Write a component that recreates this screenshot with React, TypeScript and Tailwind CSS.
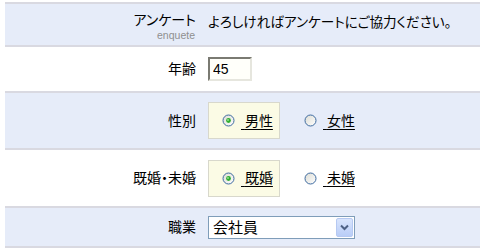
import { useState } from "react";

const font = "font-['Liberation_Sans','Noto_Sans_CJK_JP',sans-serif] [font-feature-settings:'palt']";

function Radio({ checked }: { checked: boolean }) {
  return (
    <svg width="13" height="13" viewBox="0 0 13 13" className="shrink-0">
      <defs>
        <linearGradient id={checked ? "rg-on" : "rg-off"} x1="0" y1="0" x2="1" y2="1">
          <stop offset="0" stopColor="#dcdcd4" />
          <stop offset="1" stopColor="#ffffff" />
        </linearGradient>
      </defs>
      <circle
        cx="6.5"
        cy="6.5"
        r="5.5"
        fill={`url(#${checked ? "rg-on" : "rg-off"})`}
        stroke="#3d6aa0"
        strokeWidth="1"
      />
      {checked ? <circle cx="6.5" cy="6.5" r="2.4" fill="#2fae2f" /> : null}
      {checked ? <circle cx="6" cy="6" r="0.9" fill="#9be39b" /> : null}
    </svg>
  );
}

function RadioPair({ options }: { options: string[] }) {
  const [selected, setSelected] = useState(0);
  return (
    <div className="flex items-center">
      {options.map((opt, i) =>
        i === selected ? (
          <button
            key={opt}
            onClick={() => setSelected(i)}
            className="flex h-[37px] w-[72px] items-center gap-[6px] border border-[#d8d8cc] bg-[#fbfbe5] pl-[13px]"
          >
            <Radio checked />
            <span className="text-[14px] leading-none underline underline-offset-[3px]">&nbsp;{opt}</span>
          </button>
        ) : (
          <button
            key={opt}
            onClick={() => setSelected(i)}
            className="ml-[24px] flex items-center gap-[6px]"
          >
            <Radio checked={false} />
            <span className="text-[14px] leading-none underline underline-offset-[3px]">&nbsp;{opt}</span>
          </button>
        )
      )}
    </div>
  );
}

function Label({ children }: { children: React.ReactNode }) {
  return (
    <div className="w-[192px] shrink-0 pr-[1px] text-right text-[14px] leading-none text-black">
      {children}
    </div>
  );
}

export default function App() {
  const [age, setAge] = useState("45");
  const [job, setJob] = useState("会社員");

  return (
    <div className={`${font} h-[249px] w-[480px] bg-white pl-[5px] pt-[2px] text-black`}>
      {/* アンケート */}
      <div className="flex h-[45px] items-start gap-[11px] border-y-2 border-[#d9d9e1] bg-[#e6ecf9] pt-[8px]">
        <div className="w-[192px] shrink-0 text-right">
          <div className="pr-[1px] text-[14px] leading-[16px]">アンケート</div>
          <div className="mt-[1px] pr-[2px] text-[10.5px] leading-[12px] text-[#8f8f8f]">enquete</div>
        </div>
        <div className="pt-[3px] text-[13.6px] leading-[16px]">よろしければアンケートにご協力ください。</div>
      </div>

      {/* 年齢 */}
      <div className="flex h-[46px] items-center gap-[11px] border-b-2 border-[#d9d9e1] bg-white">
        <Label>年齢</Label>
        <input
          value={age}
          onChange={(e) => setAge(e.target.value)}
          className="h-[24px] w-[44px] border-2 border-t-[#7a7a72] border-l-[#7a7a72] border-r-[#e6e6de] border-b-[#e6e6de] bg-[#fffffa] pl-[3px] text-[14px] outline-none"
        />
      </div>

      {/* 性別 */}
      <div className="flex h-[57px] items-center gap-[11px] border-b-2 border-[#d9d9e1] bg-[#e6ecf9]">
        <Label>性別</Label>
        <RadioPair options={["男性", "女性"]} />
      </div>

      {/* 既婚・未婚 */}
      <div className="flex h-[58px] items-center gap-[11px] border-b-2 border-[#d9d9e1] bg-white">
        <Label>既婚・未婚</Label>
        <RadioPair options={["既婚", "未婚"]} />
      </div>

      {/* 職業 */}
      <div className="flex h-[40px] items-center gap-[11px] border-b-2 border-[#d9d9e1] bg-[#e6ecf9]">
        <Label>職業</Label>
        <div className="relative flex h-[23px] w-[147px] items-center border border-[#7f9db9] bg-white">
          <span className="pl-[4px] text-[15px] leading-none">{job}</span>
          <select
            value={job}
            onChange={(e) => setJob(e.target.value)}
            className="absolute inset-0 opacity-0"
          >
            <option>会社員</option>
            <option>自営業</option>
            <option>学生</option>
            <option>その他</option>
          </select>
          <div className="pointer-events-none absolute right-[1px] top-[1px] flex h-[19px] w-[17px] items-center justify-center rounded-[2px] border border-[#b6c9f2] bg-[linear-gradient(#d9e5fd,#b9cdf7)]">
            <svg width="9" height="7" viewBox="0 0 9 7">
              <path d="M1 1.5 L4.5 5 L8 1.5" fill="none" stroke="#4d6185" strokeWidth="2" />
            </svg>
          </div>
        </div>
      </div>
    </div>
  );
}
